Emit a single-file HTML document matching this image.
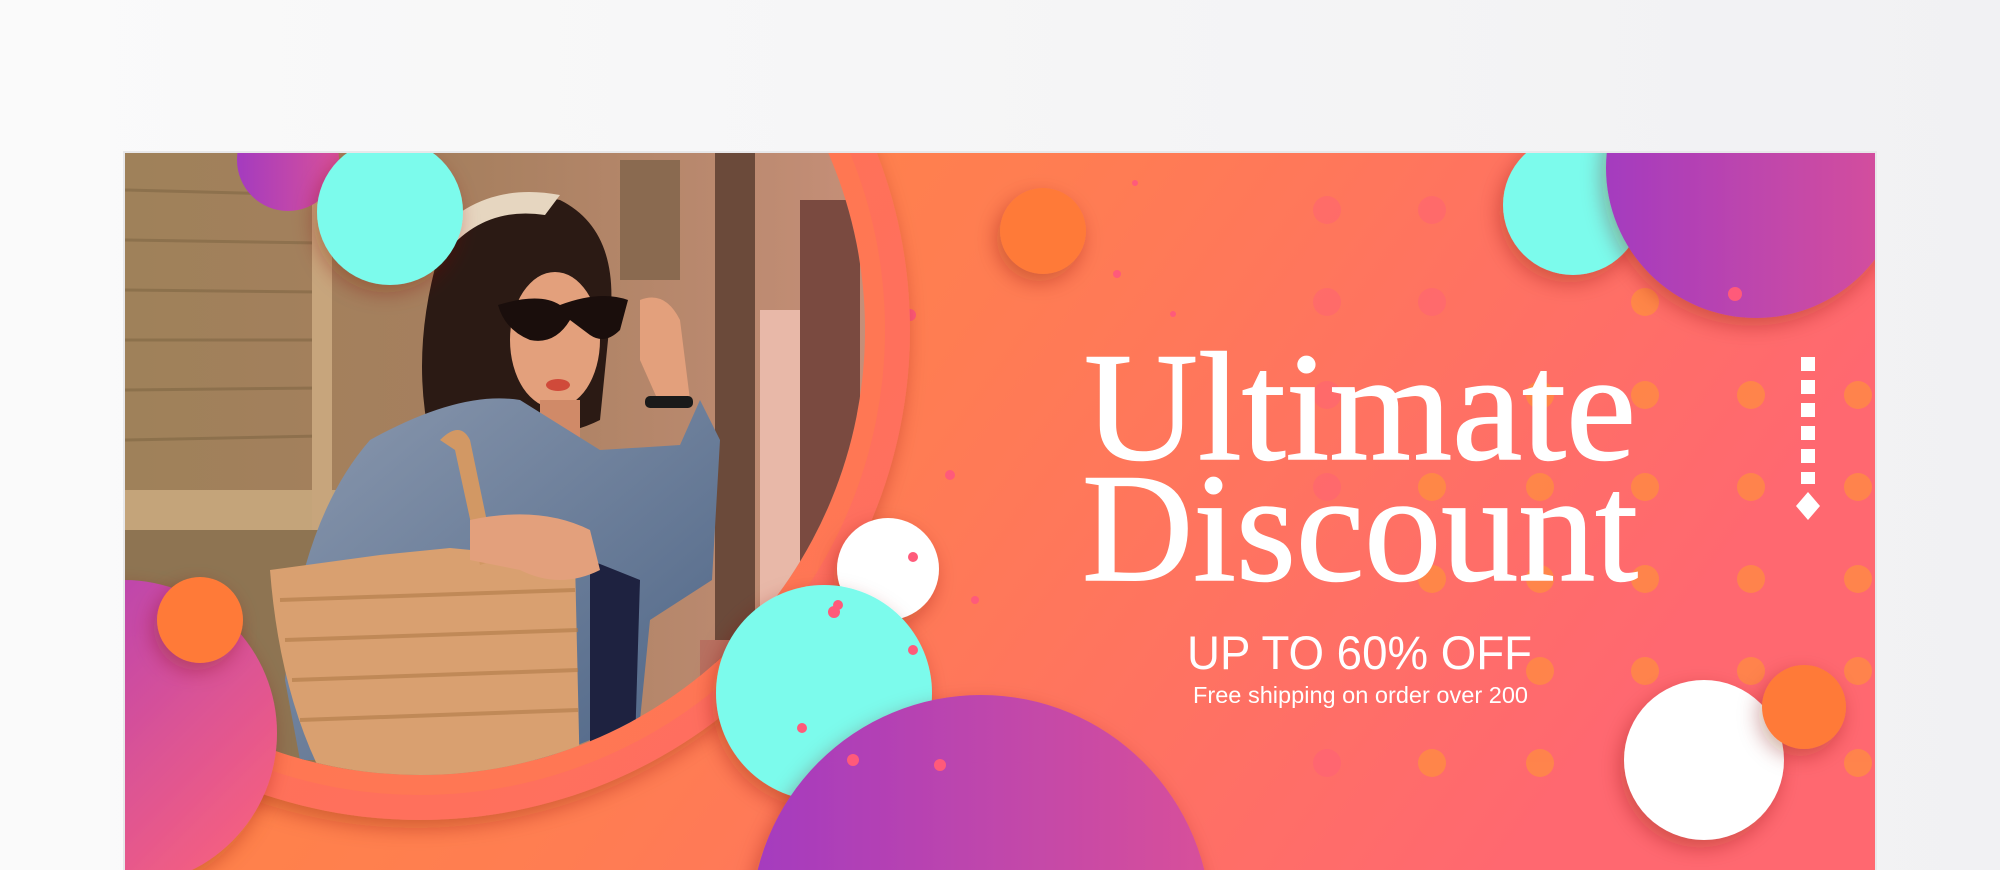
<!DOCTYPE html>
<html><head><meta charset="utf-8"><style>
html,body{margin:0;padding:0;width:2000px;height:870px;overflow:hidden;background:#f6f6f7;}
svg{display:block;position:absolute;left:0;top:0}
</style></head><body>
<svg width="2000" height="870" viewBox="0 0 2000 870" xmlns="http://www.w3.org/2000/svg">
<defs>
<linearGradient id="pg" x1="0" y1="0" x2="1" y2="0"><stop offset="0" stop-color="#fafafa"/><stop offset="1" stop-color="#f1f1f3"/></linearGradient>
<linearGradient id="bg" x1="0" y1="0" x2="1" y2="0.3"><stop offset="0" stop-color="#ff8a3e"/><stop offset="0.5" stop-color="#ff7d52"/><stop offset="1" stop-color="#ff6870"/></linearGradient>
<linearGradient id="purp" x1="0" y1="0" x2="1" y2="1"><stop offset="0" stop-color="#a93cbd"/><stop offset="1" stop-color="#ff6478"/></linearGradient>
<linearGradient id="purp2" x1="0" y1="0" x2="1" y2="0"><stop offset="0" stop-color="#a43bbf"/><stop offset="1" stop-color="#d8509a"/></linearGradient>
<linearGradient id="ring" x1="0" y1="0" x2="1" y2="1"><stop offset="0" stop-color="#ff7a4a"/><stop offset="1" stop-color="#ff6c62"/></linearGradient>
<linearGradient id="wall" x1="0" y1="0" x2="1" y2="0"><stop offset="0" stop-color="#9c8258"/><stop offset="0.5" stop-color="#a67f5e"/><stop offset="1" stop-color="#c8907a"/></linearGradient>
<linearGradient id="denim" x1="0" y1="0" x2="1" y2="1"><stop offset="0" stop-color="#8a98ae"/><stop offset="1" stop-color="#4e6586"/></linearGradient>
<clipPath id="ban"><rect x="125" y="153" width="1750" height="717"/></clipPath>
<clipPath id="photo"><circle cx="420" cy="330" r="445"/></clipPath>
<filter id="sh" x="-50%" y="-50%" width="200%" height="200%"><feDropShadow dx="-4" dy="8" stdDeviation="10" flood-color="#802000" flood-opacity="0.35"/></filter>
</defs>
<rect width="2000" height="870" fill="url(#pg)"/>
<rect x="123" y="151" width="1754" height="719" fill="#e8e8ea"/>
<g clip-path="url(#ban)">
<rect x="125" y="153" width="1750" height="717" fill="url(#bg)"/>
<g fill="#ff9a30" opacity="0.55">
<circle cx="1645" cy="395" r="14"/><circle cx="1751" cy="395" r="14"/><circle cx="1858" cy="395" r="14"/>
<circle cx="1645" cy="487" r="14"/><circle cx="1751" cy="487" r="14"/><circle cx="1858" cy="487" r="14"/>
<circle cx="1645" cy="579" r="14"/><circle cx="1751" cy="579" r="14"/><circle cx="1858" cy="579" r="14"/>
<circle cx="1645" cy="671" r="14"/><circle cx="1751" cy="671" r="14"/><circle cx="1858" cy="671" r="14"/>
<circle cx="1858" cy="763" r="14"/><circle cx="1540" cy="763" r="14"/><circle cx="1432" cy="763" r="14"/><circle cx="1540" cy="671" r="14"/>
<circle cx="1540" cy="579" r="14"/><circle cx="1540" cy="487" r="14"/><circle cx="1540" cy="395" r="14"/><circle cx="1432" cy="579" r="14"/><circle cx="1432" cy="487" r="14"/><circle cx="1645" cy="302" r="14"/>
</g>
<g fill="#ff5a80" opacity="0.35">
<circle cx="1327" cy="210" r="14"/><circle cx="1432" cy="210" r="14"/><circle cx="1327" cy="302" r="14"/><circle cx="1432" cy="302" r="14"/><circle cx="1327" cy="395" r="14"/><circle cx="1327" cy="487" r="14"/><circle cx="1327" cy="763" r="14"/>
</g>
<g fill="#ff5a7a"><circle cx="1117" cy="274" r="4"/><circle cx="1135" cy="183" r="3"/><circle cx="1173" cy="314" r="3"/><circle cx="950" cy="475" r="5"/><circle cx="975" cy="600" r="4"/><circle cx="910" cy="315" r="6"/><circle cx="1665" cy="203" r="3"/></g>
<circle cx="420" cy="330" r="490" fill="url(#ring)" filter="url(#sh)"/>
<circle cx="420" cy="330" r="465" fill="#ff7b4e" opacity="0.6"/>
<g clip-path="url(#photo)">
<rect x="0" y="0" width="900" height="820" fill="url(#wall)"/>
<g stroke="#7a6240" stroke-width="3" opacity="0.5">
<line x1="125" y1="190" x2="320" y2="195"/><line x1="125" y1="240" x2="320" y2="243"/><line x1="125" y1="290" x2="320" y2="292"/><line x1="125" y1="340" x2="320" y2="340"/><line x1="125" y1="390" x2="320" y2="388"/><line x1="125" y1="440" x2="320" y2="436"/>
</g>
<rect x="125" y="490" width="260" height="40" fill="#c4a47a"/>
<rect x="125" y="530" width="260" height="240" fill="#8e7452"/>
<rect x="312" y="150" width="20" height="380" fill="#c7a57c"/>
<rect x="620" y="160" width="60" height="120" fill="#8a6a50"/>
<rect x="715" y="150" width="40" height="600" fill="#6b4a3a"/>
<rect x="760" y="310" width="40" height="350" fill="#e8b8a8"/>
<rect x="800" y="200" width="60" height="600" fill="#7a4a40"/>
<rect x="700" y="640" width="200" height="180" fill="#b77060"/>
<path d="M440 250 Q470 180 560 200 Q620 230 610 320 L600 420 Q560 440 520 430 L430 440 Q410 350 440 250Z" fill="#2b1a14"/>
<path d="M430 240 Q480 180 560 195 L545 215 Q480 205 440 260Z" fill="#e6d6c0"/>
<ellipse cx="555" cy="340" rx="45" ry="68" fill="#e3a07c"/>
<path d="M498 305 Q540 292 560 305 Q600 290 628 300 L620 330 Q605 345 590 335 L570 320 Q555 345 530 340 Q505 330 498 305Z" fill="#1a0e0c"/>
<ellipse cx="558" cy="385" rx="12" ry="6" fill="#d04a3a"/>
<path d="M640 300 Q665 290 680 320 L690 400 L660 405 L640 360Z" fill="#e3a07c"/>
<rect x="645" y="396" width="48" height="12" rx="5" fill="#1a1a1a"/>
<rect x="540" y="400" width="40" height="40" fill="#d08a68"/>
<path d="M370 440 Q460 390 520 400 L600 450 L680 445 L700 400 L720 440 L712 580 L650 620 L640 720 L540 760 L300 760 L285 680 Q300 520 370 440Z" fill="url(#denim)"/>
<path d="M590 560 L640 580 L635 745 L590 755Z" fill="#1e2240"/>
<path d="M270 570 L380 555 L450 548 L575 560 L580 780 L330 790 Q280 700 270 570Z" fill="#d9a070"/>
<g stroke="#b07a48" stroke-width="4" opacity="0.6"><line x1="280" y1="600" x2="575" y2="590"/><line x1="285" y1="640" x2="578" y2="630"/><line x1="292" y1="680" x2="578" y2="670"/><line x1="300" y1="720" x2="578" y2="710"/></g>
<path d="M440 440 Q460 420 470 440 L495 560 L480 565 L455 450Z" fill="#d29864"/>
<path d="M470 520 Q540 505 590 530 L600 570 Q560 590 520 570 L470 560Z" fill="#e3a07c"/>
</g>
<circle cx="288" cy="160" r="51" fill="url(#purp2)"/>
<circle cx="390" cy="212" r="73" fill="#7cfbec" filter="url(#sh)"/>
<circle cx="1043" cy="231" r="43" fill="#ff7a38" filter="url(#sh)"/>
<circle cx="1573" cy="205" r="70" fill="#7cfbec" filter="url(#sh)"/>
<circle cx="1756" cy="168" r="150" fill="url(#purp2)" filter="url(#sh)"/>
<circle cx="124" cy="733" r="153" fill="url(#purp)" filter="url(#sh)"/>
<circle cx="200" cy="620" r="43" fill="#ff7a38" filter="url(#sh)"/>
<circle cx="888" cy="569" r="51" fill="#ffffff" filter="url(#sh)"/>
<circle cx="824" cy="693" r="108" fill="#7cfbec" filter="url(#sh)"/>
<circle cx="981" cy="925" r="230" fill="url(#purp2)" filter="url(#sh)"/>
<circle cx="1704" cy="760" r="80" fill="#ffffff" filter="url(#sh)"/>
<circle cx="1804" cy="707" r="42" fill="#ff7a38" filter="url(#sh)"/>
<g fill="#ff5a7a"><circle cx="913" cy="557" r="5"/><circle cx="834" cy="612" r="6"/><circle cx="838" cy="605" r="5"/><circle cx="802" cy="728" r="5"/><circle cx="853" cy="760" r="6"/><circle cx="940" cy="765" r="6"/><circle cx="913" cy="650" r="5"/><circle cx="1735" cy="294" r="7"/></g>
<g fill="#ffffff">
<rect x="1801" y="357" width="14" height="14"/><rect x="1801" y="380" width="14" height="14"/><rect x="1801" y="403" width="14" height="14"/><rect x="1801" y="426" width="14" height="14"/><rect x="1801" y="449" width="14" height="14"/><rect x="1801" y="472" width="14" height="12"/>
<path d="M1808 492 L1820 506 L1808 520 L1796 506Z"/>
</g>
<text x="1084" y="459" font-family="'Liberation Serif',serif" font-size="155" fill="#fff" stroke="#fff" stroke-width="1.5" textLength="552" lengthAdjust="spacingAndGlyphs">Ultimate</text>
<text x="1082" y="580" font-family="'Liberation Serif',serif" font-size="155" fill="#fff" stroke="#fff" stroke-width="1.5" textLength="556" lengthAdjust="spacingAndGlyphs">Discount</text>
<text x="1187" y="669" font-family="'Liberation Sans',sans-serif" font-size="47" fill="#fff" textLength="345" lengthAdjust="spacingAndGlyphs">UP TO 60% OFF</text>
<text x="1193" y="703" font-family="'Liberation Sans',sans-serif" font-size="23" fill="#fff" textLength="335" lengthAdjust="spacingAndGlyphs">Free shipping on order over 200</text>
</g>
</svg>
</body></html>
